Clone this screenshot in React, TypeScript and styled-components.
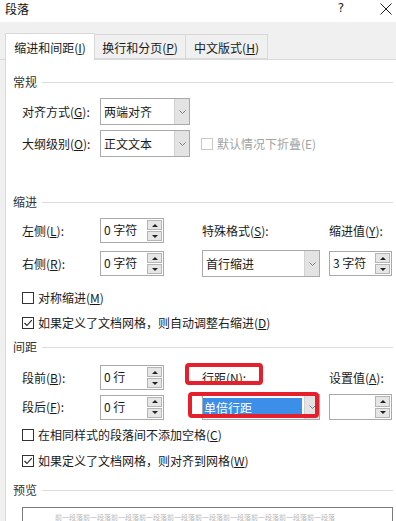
import styled, { createGlobalStyle } from 'styled-components';

const GlobalStyle = createGlobalStyle`
  html, body {
    margin: 0;
    padding: 0;
  }
  body {
    width: 396px;
    height: 521px;
    overflow: hidden;
    background: #f0f0f0;
    font-family: "Noto Sans CJK SC", "Noto Sans", sans-serif;
    font-size: 12px;
    color: #1a1a1a;
  }
  * {
    box-sizing: border-box;
  }
`;

const PREVIEW_TEXT = '前一段落'.repeat(10);

export default function App() {
  return (
    <>
      <GlobalStyle />
      <Dialog>
        <TitleBar>
          <TitleText>段落</TitleText>
          <HelpMark>?</HelpMark>
          <CloseIcon />
        </TitleBar>

        <TabStrip>
          <Tab $active $w={90}>
            缩进和间距(<u>I</u>)
          </Tab>
          <Tab $w={91}>
            换行和分页(<u>P</u>)
          </Tab>
          <Tab $w={82}>
            中文版式(<u>H</u>)
          </Tab>
        </TabStrip>

        <Panel>
          <Heading>常规</Heading>
          <FieldRow $h={27} $mt={9}>
            <Label>
              对齐方式(<u>G</u>):
            </Label>
            <Dropdown $w={90} value="两端对齐" />
          </FieldRow>
          <FieldRow $h={27} $mt={5}>
            <Label>
              大纲级别(<u>O</u>):
            </Label>
            <Dropdown $w={90} value="正文文本" />
            <CheckCell>
              <CheckOption disabled label="默认情况下折叠(E)" />
            </CheckCell>
          </FieldRow>

          <Heading $mt={38}>缩进</Heading>
          <FieldRow $h={25} $mt={9}>
            <Label>
              左侧(<u>L</u>):
            </Label>
            <Spinner $w={64} value="0 字符" />
            <Label>
              特殊格式(<u>S</u>):
            </Label>
            <Label>
              缩进值(<u>Y</u>):
            </Label>
          </FieldRow>
          <FieldRow $h={25} $mt={7}>
            <Label>
              右侧(<u>R</u>):
            </Label>
            <Spinner $w={64} value="0 字符" />
            <Dropdown $w={118} $h={27} value="首行缩进" />
            <Spinner $w={63} value="3 字符" />
          </FieldRow>
          <CheckRow $mt={15}>
            <CheckOption
              label={
                <>
                  对称缩进(<u>M</u>)
                </>
              }
            />
          </CheckRow>
          <CheckRow $mt={9}>
            <CheckOption
              checked
              label={
                <>
                  如果定义了文档网格，则自动调整右缩进(<u>D</u>)
                </>
              }
            />
          </CheckRow>

          <Heading $mt={9}>间距</Heading>
          <FieldRow $h={25} $mt={11}>
            <Label>
              段前(<u>B</u>):
            </Label>
            <Spinner $w={64} value="0 行" />
            <MarkedCell>
              <Label>
                行距(<u>N</u>):
              </Label>
              <Annotation $left={-17} $top={-2} $w={78} $h={22} />
            </MarkedCell>
            <Label>
              设置值(<u>A</u>):
            </Label>
          </FieldRow>
          <FieldRow $h={26} $mt={4}>
            <Label>
              段后(<u>F</u>):
            </Label>
            <Spinner $w={64} value="0 行" />
            <MarkedCell>
              <Dropdown $w={118} $h={26} value="单倍行距" selected />
              <Annotation $left={-14} $top={-2} $w={131} $h={26} />
            </MarkedCell>
            <Spinner $w={63} $h={26} value="" />
          </FieldRow>
          <CheckRow $mt={7}>
            <CheckOption
              label={
                <>
                  在相同样式的段落间不添加空格(<u>C</u>)
                </>
              }
            />
          </CheckRow>
          <CheckRow $mt={10}>
            <CheckOption
              checked
              label={
                <>
                  如果定义了文档网格，则对齐到网格(<u>W</u>)
                </>
              }
            />
          </CheckRow>

          <Heading $mt={14}>预览</Heading>
          <PreviewBox>
            <PreviewLine>{PREVIEW_TEXT}</PreviewLine>
          </PreviewBox>
        </Panel>
      </Dialog>
    </>
  );
}

function Dropdown(props: {
  $w: number;
  $h?: number;
  value: string;
  selected?: boolean;
}) {
  return (
    <SelectBox $w={props.$w} $h={props.$h ?? 27}>
      <SelectValue $selected={props.selected}>{props.value}</SelectValue>
      <DropButton>
        <ChevronIcon />
      </DropButton>
    </SelectBox>
  );
}

function Spinner(props: { $w: number; $h?: number; value: string }) {
  return (
    <SpinBox $w={props.$w} $h={props.$h ?? 25}>
      <SpinText>{props.value}</SpinText>
      <SpinButtons>
        <SpinButton>
          <ArrowUp />
        </SpinButton>
        <SpinButton>
          <ArrowDown />
        </SpinButton>
      </SpinButtons>
    </SpinBox>
  );
}

function CheckOption(props: {
  label: React.ReactNode;
  checked?: boolean;
  disabled?: boolean;
}) {
  return (
    <CheckWrap $disabled={props.disabled}>
      <CheckBox $disabled={props.disabled}>
        {props.checked ? (
          <svg width="10" height="10" viewBox="0 0 10 10">
            <polyline
              points="1.5 5 4 7.5 8.8 2.2"
              fill="none"
              stroke="#222"
              strokeWidth="1.1"
            />
          </svg>
        ) : null}
      </CheckBox>
      <span>{props.label}</span>
    </CheckWrap>
  );
}

function ChevronIcon() {
  return (
    <svg width="7" height="4" viewBox="0 0 7 4">
      <polyline
        points="0.5 0.5 3.5 3.5 6.5 0.5"
        fill="none"
        stroke="#808080"
        strokeWidth="1"
      />
    </svg>
  );
}

function CloseIcon() {
  return (
    <CloseSvg width="12" height="12" viewBox="0 0 12 12">
      <line x1="0.5" y1="0.5" x2="11.5" y2="11.5" stroke="#222" strokeWidth="1" />
      <line x1="11.5" y1="0.5" x2="0.5" y2="11.5" stroke="#222" strokeWidth="1" />
    </CloseSvg>
  );
}

const Dialog = styled.div`
  width: 396px;
  height: 521px;
  display: flex;
  flex-direction: column;
  overflow: hidden;
`;

const TitleBar = styled.div`
  height: 22px;
  flex: none;
  background: #fff;
  display: flex;
  align-items: flex-start;
  padding: 2px 0 0 5px;
  line-height: 13px;
`;

const TitleText = styled.div`
  flex: 1;
  color: #111;
`;

const HelpMark = styled.div`
  width: 12px;
  text-align: center;
  font-family: "DejaVu Sans", sans-serif;
  font-size: 12px;
  color: #222;
  margin-right: 33px;
`;

const CloseSvg = styled.svg`
  margin: 1px 4px 0 0;
`;

const TabStrip = styled.div`
  height: 38px;
  flex: none;
  display: flex;
  align-items: flex-end;
  padding: 11px 0 0 5px;
  border-bottom: 1px solid #d9d9d9;
  background: #f0f0f0;
`;

const Tab = styled.div<{ $active?: boolean; $w: number }>`
  width: ${p => p.$w}px;
  height: ${p => (p.$active ? 27 : 25)}px;
  margin-bottom: ${p => (p.$active ? -1 : 0)}px;
  display: flex;
  align-items: center;
  justify-content: center;
  padding-top: ${p => (p.$active ? 0 : 1)}px;
  border: 1px solid #d9d9d9;
  border-bottom: ${p => (p.$active ? 'none' : '1px solid #d9d9d9')};
  border-left: ${p => (p.$active ? '1px solid #d9d9d9' : 'none')};
  background: ${p => (p.$active ? '#fff' : '#f0f0f0')};
  color: #1a1a1a;
  white-space: nowrap;
`;

const Panel = styled.div`
  flex: 1;
  margin-left: 5px;
  background: #fff;
  border-left: 1px solid #d9d9d9;
  padding: 15px 3px 0 7px;
  display: flex;
  flex-direction: column;
`;

const Heading = styled.div<{ $mt?: number }>`
  height: 14px;
  line-height: 14px;
  margin-top: ${p => p.$mt ?? 0}px;
  display: flex;
  align-items: center;
  color: #333;

  &::after {
    content: '';
    flex: 1;
    height: 1px;
    margin-left: 5px;
    background: #dcdcdc;
  }
`;

const FieldRow = styled.div<{ $h: number; $mt: number }>`
  height: ${p => p.$h}px;
  margin: ${p => p.$mt}px 0 0 9px;
  display: grid;
  grid-template-columns: 78px 102px 127px 63px;
  align-items: center;
`;

const Label = styled.div`
  line-height: 14px;
  white-space: nowrap;
  color: #1a1a1a;
`;

const MarkedCell = styled.div`
  position: relative;
  height: 100%;
  display: flex;
  align-items: center;
`;

const CheckCell = styled.div`
  grid-column: 3 / span 2;
  margin-left: -1px;
`;

const Annotation = styled.div<{
  $left: number;
  $top: number;
  $w: number;
  $h: number;
}>`
  position: absolute;
  left: ${p => p.$left}px;
  top: ${p => p.$top}px;
  width: ${p => p.$w}px;
  height: ${p => p.$h}px;
  border: 4px solid #e61f2d;
  border-radius: 4px;
  pointer-events: none;
`;

const SelectBox = styled.div<{ $w: number; $h: number }>`
  width: ${p => p.$w}px;
  height: ${p => p.$h}px;
  display: flex;
  border: 1px solid #a9a9a9;
  background: #fff;
`;

const SelectValue = styled.div<{ $selected?: boolean }>`
  flex: 1;
  display: flex;
  align-items: center;
  margin: ${p => (p.$selected ? '3px 2px 3px 0' : '0')};
  padding-left: ${p => (p.$selected ? 1 : 3)}px;
  background: ${p => (p.$selected ? '#3d8ee8' : 'transparent')};
  color: ${p => (p.$selected ? '#fff' : '#1a1a1a')};
  white-space: nowrap;
`;

const DropButton = styled.div`
  width: 15px;
  display: flex;
  align-items: center;
  justify-content: center;
  background: #e3e3e3;
  border-left: 1px solid #d2d2d2;
`;

const SpinBox = styled.div<{ $w: number; $h: number }>`
  width: ${p => p.$w}px;
  height: ${p => p.$h}px;
  display: flex;
  border: 1px solid #a9a9a9;
  background: #fff;
`;

const SpinText = styled.div`
  flex: 1;
  display: flex;
  align-items: center;
  padding: 0 0 2px 3px;
  white-space: nowrap;
`;

const SpinButtons = styled.div`
  width: 15px;
  margin: 1px 1px 1px 0;
  display: flex;
  flex-direction: column;
  gap: 1px;
`;

const SpinButton = styled.div`
  flex: 1;
  display: flex;
  align-items: center;
  justify-content: center;
  background: #e6e6e6;
  border: 1px solid #b5b5b5;
`;

const ArrowUp = styled.div`
  width: 0;
  height: 0;
  border-left: 3px solid transparent;
  border-right: 3px solid transparent;
  border-bottom: 3px solid #222;
`;

const ArrowDown = styled.div`
  width: 0;
  height: 0;
  border-left: 3px solid transparent;
  border-right: 3px solid transparent;
  border-top: 3px solid #222;
`;

const CheckRow = styled.div<{ $mt: number }>`
  height: 16px;
  margin: ${p => p.$mt}px 0 0 9px;
  display: flex;
  align-items: center;
`;

const CheckWrap = styled.div<{ $disabled?: boolean }>`
  display: flex;
  align-items: center;
  gap: 4px;
  line-height: 14px;
  white-space: nowrap;
  color: ${p => (p.$disabled ? '#a3a3a3' : '#1a1a1a')};
`;

const CheckBox = styled.div<{ $disabled?: boolean }>`
  width: 12px;
  height: 12px;
  flex: none;
  display: flex;
  align-items: center;
  justify-content: center;
  border: 1px solid ${p => (p.$disabled ? '#c8c8c8' : '#333')};
  background: #fff;
`;

const PreviewBox = styled.div`
  height: 40px;
  margin: 10px 0 0 9px;
  border: 1px solid #7a7a7a;
  background: #fff;
  padding: 5px 0 0 32px;
`;

const PreviewLine = styled.div`
  font-size: 7px;
  line-height: 8px;
  color: #b8b8b8;
  white-space: nowrap;
  overflow: hidden;
  width: 286px;
`;
